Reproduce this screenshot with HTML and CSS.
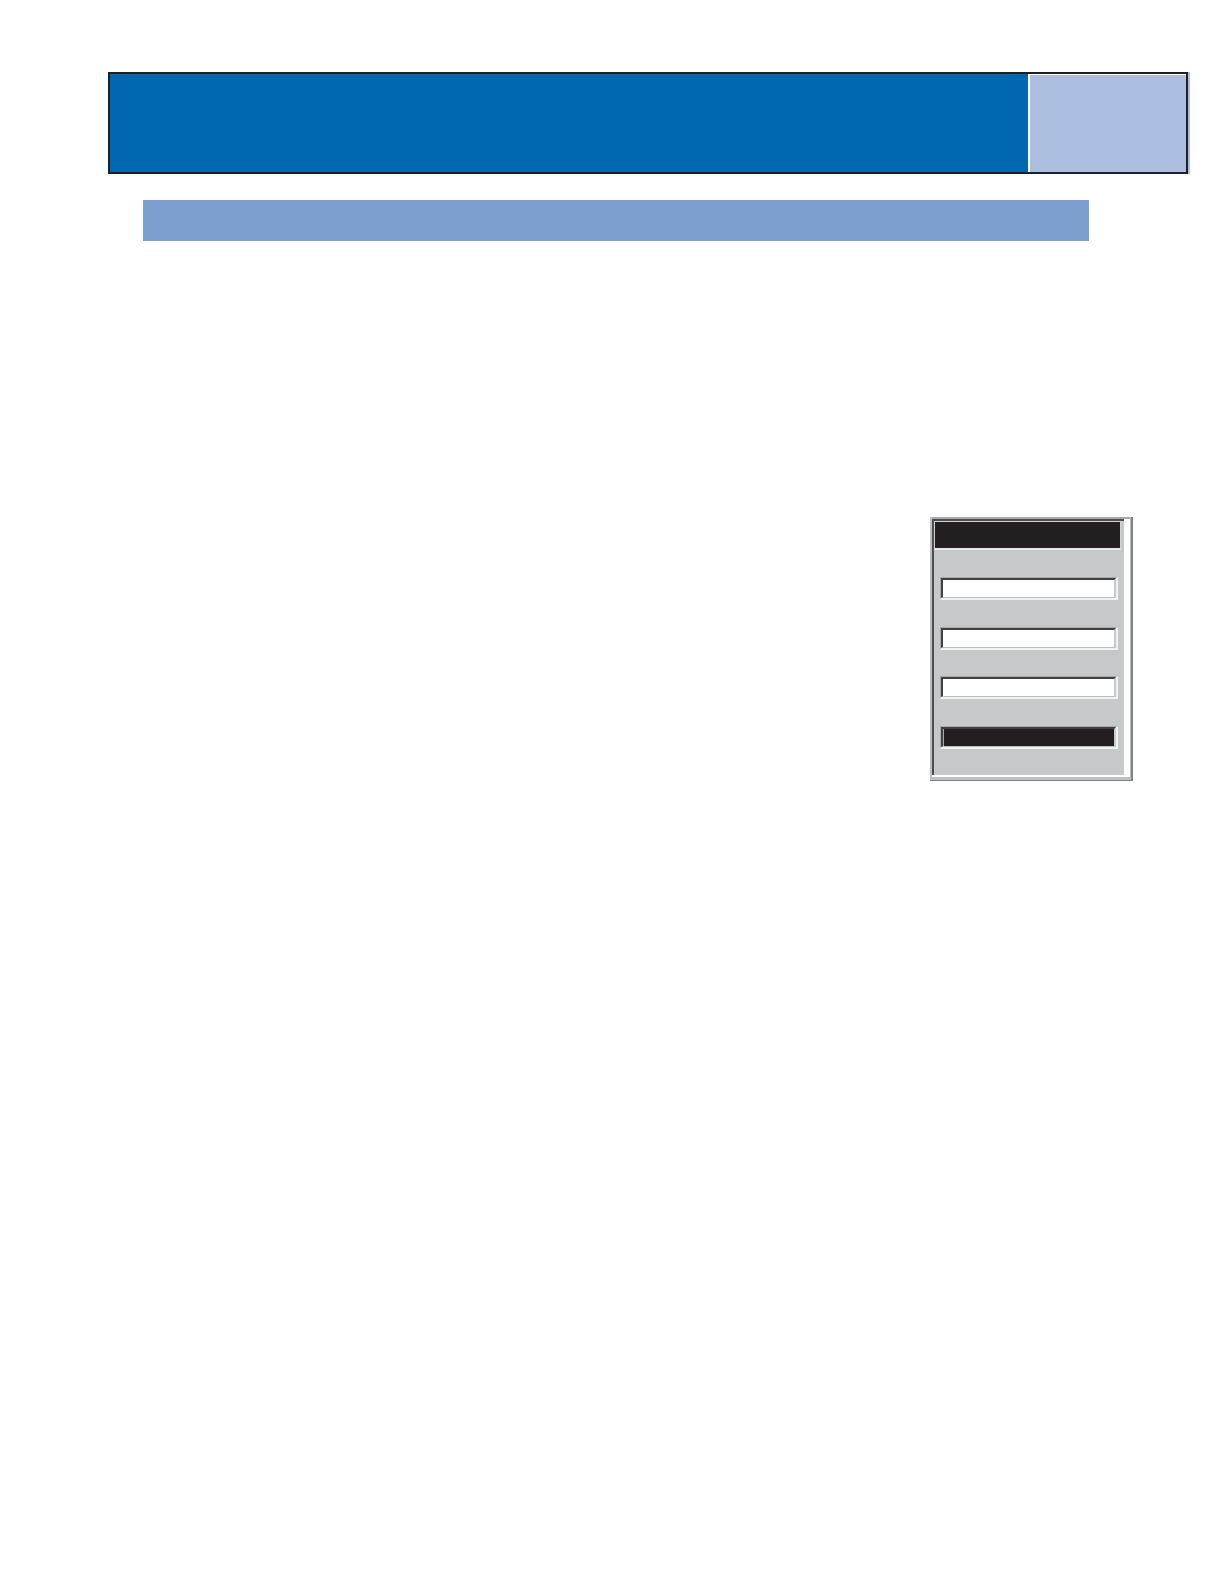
FILE: index.html
```html
<!DOCTYPE html>
<html lang="en">
<head>
<meta charset="utf-8">
<meta name="viewport" content="width=device-width, initial-scale=1">
<title>Settings</title>
<link rel="stylesheet" href="styles.css">
</head>
<body>
<header class="banner">
  <div class="banner-main"></div>
  <div class="banner-side"></div>
</header>
<main>
  <div class="section-bar"></div>
  <form class="panel">
    <div class="panel-inner">
      <div class="panel-title"></div>
      <div class="fields">
        <div class="field"><input type="text" aria-label="Field 1"></div>
        <div class="field"><input type="text" aria-label="Field 2"></div>
        <div class="field"><input type="text" aria-label="Field 3"></div>
        <div class="field field-selected"><input type="text" aria-label="Field 4"></div>
      </div>
    </div>
  </form>
</main>
</body>
</html>
```
FILE: styles.css
```css
* {
  box-sizing: border-box;
}

body {
  margin: 0;
  padding: 72px 36px 72px 108px;
  background: #fff;
  font-family: "Liberation Sans", Arial, sans-serif;
}

.banner {
  display: flex;
  height: 102px;
  border: 2px solid #231f20;
  background: #fff;
  box-shadow: 2px 0 0 #adbfe1;
}

.banner-main {
  flex: 1;
  background: #0067b1;
}

.banner-side {
  width: 158px;
  border: solid #fff;
  border-width: 1px 0 0 2px;
  background: #adbfe1;
}

main {
  display: flex;
  flex-direction: column;
  padding: 26px 55px 0 35px;
}

.section-bar {
  height: 41px;
  margin-right: 44px;
  background: #7c9fd0;
}

/* Raised outer frame around a sunken form area */
.panel {
  align-self: flex-end;
  width: 203px;
  margin-top: 276px;
  padding: 2px 9px 6px 2px;
  background: #fff;
  box-shadow:
    inset -2px -1px 0 #808285,
    inset -3px -4px 0 #bcbec0,
    inset 2px 0 0 #bcbec0,
    inset 0 2px 0 #a7a9ac;
}

.panel-inner {
  border: solid #4d4d4f;
  border-width: 2px 0 0 2px;
  background: #c7c8ca;
}

.panel-title {
  height: 29px;
  margin-right: 3px;
  border: solid #d1d3d4;
  border-width: 1px 1px 2px;
  border-bottom-color: #e6e7e8;
  background: #231f20;
}

.fields {
  display: flex;
  flex-direction: column;
  justify-content: space-between;
  height: 225px;
  padding: 27px 6px 26px;
}

.field {
  border: solid;
  border-width: 1px 2px 2px 1px;
  border-color: #a7a9ac #f1f2f2 #f1f2f2 #a7a9ac;
}

.field input {
  display: block;
  width: 100%;
  height: 20px;
  padding: 0 4px;
  border: solid;
  border-width: 2px 2px 1px 2px;
  border-color: #414042 #c7c8ca #bcbec0 #414042;
  border-radius: 0;
  outline: 0;
  background: #fff;
  font: 12px "Liberation Sans", Arial, sans-serif;
}

.field-selected input {
  background: #231f20;
  box-shadow: inset 1px 0 0 #a7a9ac;
  color: #fff;
}
```
